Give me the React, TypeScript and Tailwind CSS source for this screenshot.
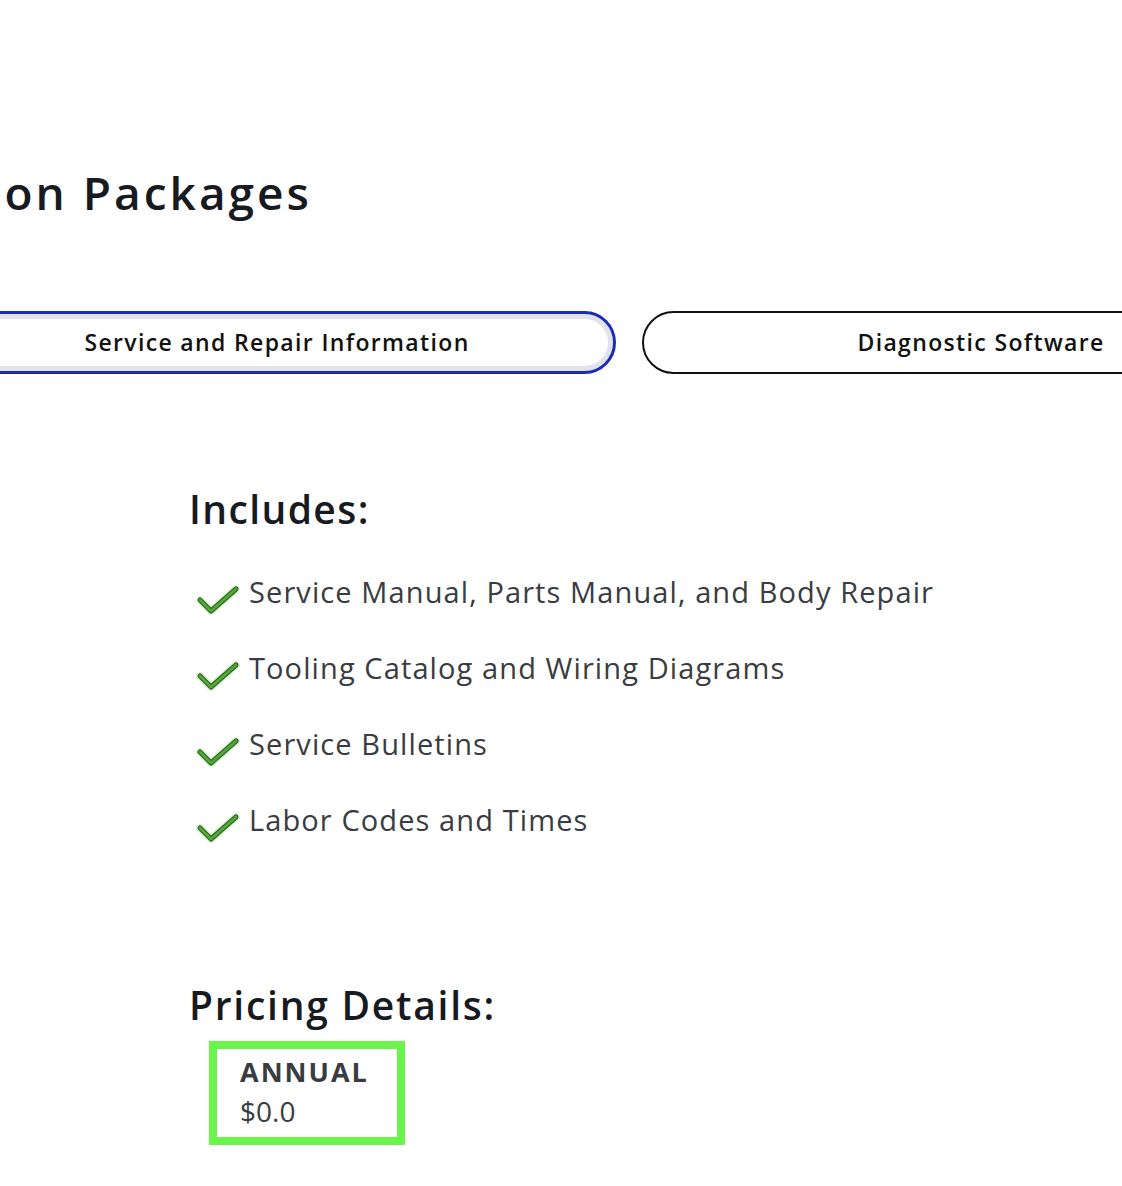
import React from "react";

const font = { fontFamily: '"Open Sans", "Liberation Sans", sans-serif' };

function Check() {
  return (
    <svg width="46" height="34" viewBox="0 0 46 34" className="shrink-0">
      <polyline points="5,17 16,28 41,6" fill="none" stroke="#b8e6a8" strokeWidth="8" strokeLinecap="round" strokeLinejoin="round" opacity="0.5" />
      <polyline points="5,17 16,28 41,6" fill="none" stroke="#2f6a22" strokeWidth="5" strokeLinecap="round" strokeLinejoin="round" />
      <polyline points="5,17 16,28 41,6" fill="none" stroke="#57a83a" strokeWidth="2.5" strokeLinecap="round" strokeLinejoin="round" />
    </svg>
  );
}

const items = [
  "Service Manual, Parts Manual, and Body Repair",
  "Tooling Catalog and Wiring Diagrams",
  "Service Bulletins",
  "Labor Codes and Times",
];

export default function App() {
  return (
    <div className="w-[1122px] h-[1186px] overflow-hidden bg-white" style={font}>
      <div className="pt-[160px]">
        <div className="w-[312px] flex justify-end">
          <h1 className="whitespace-nowrap text-[46px] leading-[64px] font-semibold text-[#171a20] tracking-[3px]">
            Subscription Packages
          </h1>
        </div>
      </div>
      <div className="mt-[87px] ml-[-62px] flex gap-[26px]">
        <div className="w-[678px] h-[63px] shrink-0 rounded-full border-[3px] border-[#1a2bb5] shadow-[inset_0_0_0_5px_#e2e3ea] flex items-center justify-center text-[23px] font-semibold text-[#111] tracking-[1.35px]">
          Service and Repair Information
        </div>
        <div className="w-[678px] h-[63px] shrink-0 rounded-full border-2 border-[#111] flex items-center justify-center text-[23px] font-semibold text-[#111] tracking-[1.35px]">
          Diagnostic Software
        </div>
      </div>
      <div className="pl-[189px] pt-[111px]">
        <h2 className="text-[39px] leading-[48px] font-semibold text-[#171a20] tracking-[1.4px]">Includes:</h2>
        <div className="mt-[38px] flex flex-col gap-[34px]">
          {items.map((t) => (
            <div key={t} className="flex items-start gap-[8px] pl-[6px] h-[42px]">
              <div className="pt-[12px]"><Check /></div>
              <span className="text-[29px] leading-[42px] text-[#393c41] tracking-[1.1px] whitespace-nowrap">{t}</span>
            </div>
          ))}
        </div>
        <h2 className="mt-[140px] text-[39px] leading-[48px] font-semibold text-[#171a20] tracking-[1.75px]">Pricing Details:</h2>
        <div className="mt-[12px] ml-[20px] w-[196px] h-[104px] border-[8px] border-[#6af54a] pl-[23px] pt-[4px]">
          <div className="text-[27px] leading-[38px] font-bold text-[#393c41] tracking-[2px]">ANNUAL</div>
          <div className="text-[28px] leading-[40px] text-[#393c41]">$0.0</div>
        </div>
      </div>
    </div>
  );
}
